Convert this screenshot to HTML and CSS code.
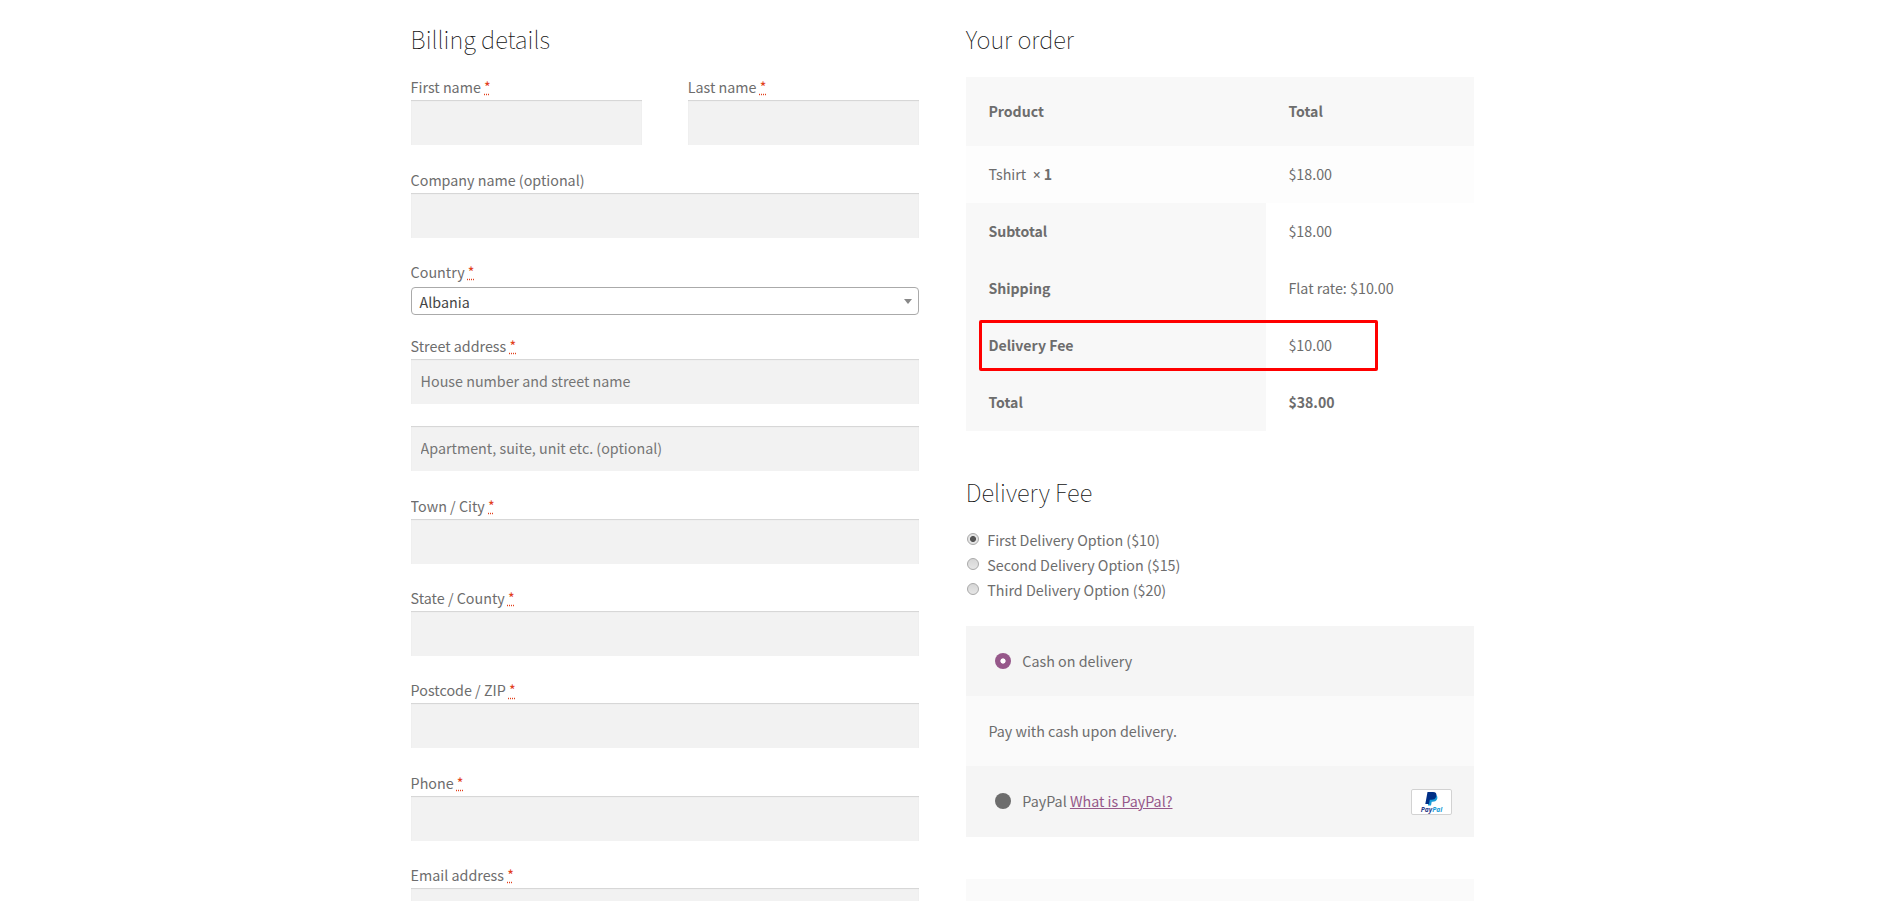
FILE: index.html
```html
<!DOCTYPE html>
<html lang="en">
<head>
<meta charset="utf-8">
<title>Checkout</title>
<link rel="stylesheet" href="styles.css">
</head>
<body>
<form class="checkout">
  <section class="billing">
    <h3 class="heading">Billing details</h3>
    <div class="name-row">
      <div class="field"><label class="label">First name <abbr class="required" title="required">*</abbr></label><input class="input" type="text"></div>
      <div class="field"><label class="label">Last name <abbr class="required" title="required">*</abbr></label><input class="input" type="text"></div>
    </div>
    <div class="field company"><label class="label">Company name (optional)</label><input class="input" type="text"></div>
    <div class="field country"><label class="label">Country <abbr class="required" title="required">*</abbr></label>
      <div class="select"><span>Albania</span><span class="arrow"></span></div>
    </div>
    <div class="field"><label class="label">Street address <abbr class="required" title="required">*</abbr></label><input class="input" type="text" placeholder="House number and street name"></div>
    <div class="field"><input class="input" type="text" placeholder="Apartment, suite, unit etc. (optional)"></div>
    <div class="field tight"><label class="label">Town / City <abbr class="required" title="required">*</abbr></label><input class="input" type="text"></div>
    <div class="field tight"><label class="label">State / County <abbr class="required" title="required">*</abbr></label><input class="input" type="text"></div>
    <div class="field tight"><label class="label">Postcode / ZIP <abbr class="required" title="required">*</abbr></label><input class="input" type="text"></div>
    <div class="field tight"><label class="label">Phone <abbr class="required" title="required">*</abbr></label><input class="input" type="text"></div>
    <div class="field"><label class="label">Email address <abbr class="required" title="required">*</abbr></label><input class="input" type="text"></div>
  </section>

  <section class="order">
    <h3 class="heading">Your order</h3>
    <div class="table">
      <div class="row head"><div class="cell">Product</div><div class="cell">Total</div></div>
      <div class="row item"><div class="cell">Tshirt &nbsp;<strong><span class="times">×</span> 1</strong></div><div class="cell">$18.00</div></div>
      <div class="row"><div class="cell name">Subtotal</div><div class="cell">$18.00</div></div>
      <div class="row"><div class="cell name">Shipping</div><div class="cell">Flat rate: $10.00</div></div>
      <div class="row fee"><div class="cell name">Delivery Fee</div><div class="cell">$10.00</div><div class="highlight"></div></div>
      <div class="row"><div class="cell name">Total</div><div class="cell"><strong>$38.00</strong></div></div>
    </div>
    <h3 class="heading fee-heading">Delivery Fee</h3>
    <div class="options">
      <label class="option"><span class="radio checked"></span>First Delivery Option ($10)</label>
      <label class="option"><span class="radio"></span>Second Delivery Option ($15)</label>
      <label class="option"><span class="radio"></span>Third Delivery Option ($20)</label>
    </div>
    <div class="payment">
      <div class="method"><span class="dot selected"></span><span>Cash on delivery</span></div>
      <div class="method-info">Pay with cash upon delivery.</div>
      <div class="method paypal"><span class="dot"></span><span>PayPal <a class="link" href="#">What is PayPal?</a></span>
        <svg class="badge" width="41" height="26" viewBox="0 0 41 26">
          <rect x=".5" y=".5" width="40" height="25" rx="1.5" fill="#fff" stroke="#d2d2d2"/>
          <path d="M18 5.5h6.3c2.3 1 2.6 3.2 1.600 5.100-.8 1.600-2.200 2.100-4.200 2.100h-1l-.7 3.800h-3.100z" fill="#179bd7"/>
          <path d="M16.500 3h5.500c2.700 0 4 1.600 3.300 4.200-.6 2.400-2.300 3.500-4.800 3.500h-1.700l-.8 4.300h-3.700z" fill="#002f86"/>
          <text class="badge-text" x="9.800" y="22.600" textLength="21.500" lengthAdjust="spacingAndGlyphs"><tspan fill="#1f3a8a">Pay</tspan><tspan fill="#179bd7">Pal</tspan></text>
        </svg>
      </div>
    </div>
    <div class="place-order"></div>
  </section>
</form>
</body>
</html>
```
FILE: styles.css
```css
* { box-sizing: border-box; }
html { overflow: hidden; }
body {
  margin: 0;
  height: 901px;
  overflow: hidden;
  background: #fff;
  color: #6d6d6d;
  font-family: "Noto Sans CJK SC", "Noto Sans", sans-serif;
  font-size: 14.3px;
  line-height: 26px;
}
.checkout {
  display: flex;
  gap: 47px;
  width: 1063.4px;
  height: 901px;
  overflow: hidden;
  margin-left: 410.6px;
  padding-top: 18px;
}
.billing, .order { width: 508.2px; }
.heading {
  margin: 0;
  height: 56px;
  color: #111;
  font-size: 23.8px;
  font-weight: 100;
  line-height: 42px;
}
.name-row { display: flex; justify-content: space-between; }
.name-row .field { width: 231px; }
.field { margin-bottom: 22px; }
.company { margin-bottom: 21px; }
.tight { margin-bottom: 21.2px; }
.label { display: block; height: 26px; }
.required { color: #e2401c; text-decoration: underline dotted; }
.input {
  display: block;
  width: 100%;
  height: 45px;
  padding: 0 10px 2px;
  border: 0;
  border-radius: 0;
  background: #f2f2f2;
  box-shadow: inset 0 1px 1px rgba(0, 0, 0, .125);
  color: #43454b;
  font: inherit;
}
.input::placeholder { color: #757575; opacity: 1; }
.country { margin-bottom: 18px; }
.select {
  display: flex;
  align-items: center;
  justify-content: space-between;
  height: 28px;
  margin-top: 2px;
  padding: 2px 6px 0 8px;
  border: 1px solid #aaa;
  border-radius: 4px;
  color: #444;
}
.arrow {
  margin-top: -1px;
  border: 4px solid transparent;
  border-top: 5px solid #888;
  border-bottom: 0;
}
.order .heading { height: 59px; }
.row { display: grid; grid-template-columns: 300px 208px; height: 57px; }
.cell { padding: 15.400px 22.600px 0; }
.head { height: 69px; background: #f8f8f8; font-weight: 600; font-size: 14.100px; }
.head .cell { padding-top: 21px; }
.item { background: #fdfdfd; }
.name { padding-top: 15px; background: #f8f8f8; font-weight: 600; font-size: 14.100px; }
strong { font-weight: 600; font-size: 14.100px; }
.times { font-family: "Open Sans", sans-serif; font-size: 14px; line-height: 1; }
.fee { position: relative; }
.highlight {
  position: absolute;
  left: 13px;
  top: 3px;
  width: 399px;
  height: 51px;
  border: 3px solid #f00;
  border-radius: 2px;
}
.order .fee-heading { height: 56px; margin-top: 40px; }
.option { display: flex; height: 25px; line-height: 25px; }
.radio {
  width: 12px;
  height: 12px;
  margin: 6px 8.500px 0 1px;
  border: 1px solid #a9a9a9;
  border-radius: 50%;
  background: linear-gradient(#d6d6d6, #e6e6e6);
}
.checked { background: radial-gradient(circle, #555 0 2.600px, #e4e4e4 3.400px); }
.payment { margin-top: 24px; }
.method, .method-info {
  display: flex;
  align-items: center;
  height: 70px;
  padding: 0 22.600px;
  background: #f5f5f5;
}
.method-info { background: #fafafa; }
.paypal { height: 71px; padding: 0 22px 1px 22.600px; }
.dot {
  width: 16px;
  height: 16px;
  margin: 0 11.600px 0 6.400px;
  border-radius: 50%;
  background: #6d6d6d;
}
.selected { background: radial-gradient(circle, #fff 0 2.200px, #96588a 3px); }
.link { color: #96588a; text-decoration: underline; }
.badge { margin: 1px 0 0 auto; }
.badge-text { font: italic 700 6.500px "Open Sans", sans-serif; }
.place-order { height: 60px; margin-top: 42px; background: #fafafa; }
```
